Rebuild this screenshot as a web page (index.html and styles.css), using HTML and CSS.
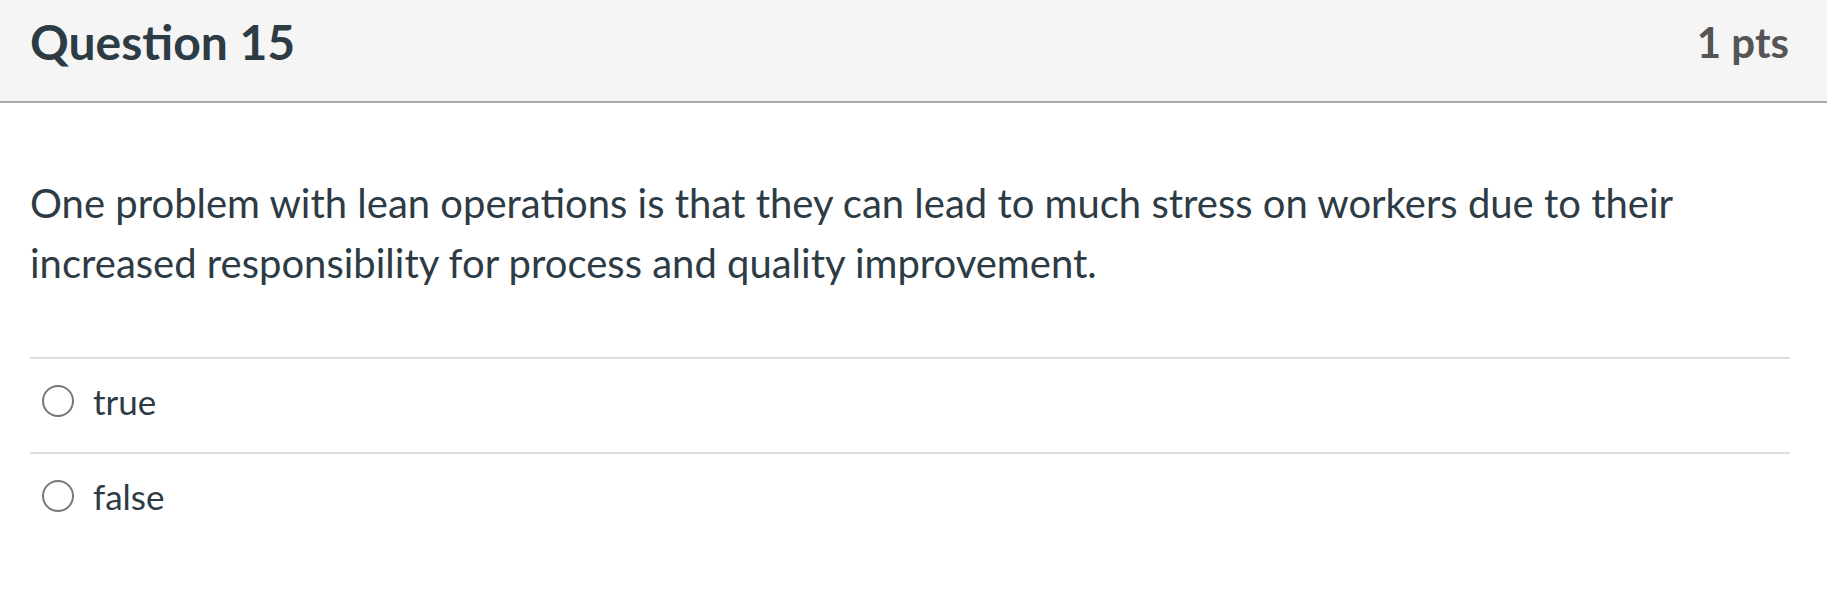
FILE: index.html
```html
<!DOCTYPE html>
<html lang="en">
<head>
<meta charset="utf-8">
<title>Question 15</title>
<link rel="stylesheet" href="styles.css">
</head>
<body>
<div class="question">
  <div class="q-header">
    <h2 class="q-title">Question 15</h2>
    <div class="q-points">1 pts</div>
  </div>
  <div class="q-body">
    <p class="q-text">One problem with lean operations is that they can lead to much stress on workers due to their increased responsibility for process and quality improvement.</p>
    <div class="answers">
      <label class="answer">
        <span class="radio"></span>
        <span class="answer-label">true</span>
      </label>
      <label class="answer">
        <span class="radio"></span>
        <span class="answer-label">false</span>
      </label>
    </div>
  </div>
</div>
</body>
</html>
```

FILE: styles.css
```css
* { box-sizing: border-box; }
html, body {
  margin: 0;
  padding: 0;
  background: #ffffff;
}
body {
  font-family: Lato, "Noto Sans", sans-serif;
  color: #2d3b45;
}
.q-header {
  height: 103px;
  background: #f5f5f5;
  border-bottom: 2px solid #aaaaaa;
  display: flex;
  justify-content: space-between;
  align-items: flex-start;
  padding: 13px 38px 0 30px;
}
.q-title {
  margin: 0;
  font-size: 48px;
  font-weight: 700;
  line-height: 57px;
  color: #2d3b45;
}
.q-points {
  font-size: 42px;
  font-weight: 700;
  line-height: 57px;
  padding-top: 1px;
  color: #555555;
}
.q-body {
  padding: 0 37px 0 30px;
}
.q-text {
  margin: 70px 0 0 0;
  font-size: 40px;
  line-height: 60px;
  color: #2d3b45;
}
.answers {
  margin-top: 64px;
}
.answer {
  display: flex;
  align-items: center;
  border-top: 2px solid #dddddd;
  height: 95px;
  padding: 0 0 9px 12px;
}
.radio {
  width: 32px;
  height: 32px;
  border: 2.5px solid #777777;
  border-radius: 50%;
  flex: none;
}
.answer-label {
  margin-left: 19px;
  font-size: 35px;
  color: #2d3b45;
}
```
